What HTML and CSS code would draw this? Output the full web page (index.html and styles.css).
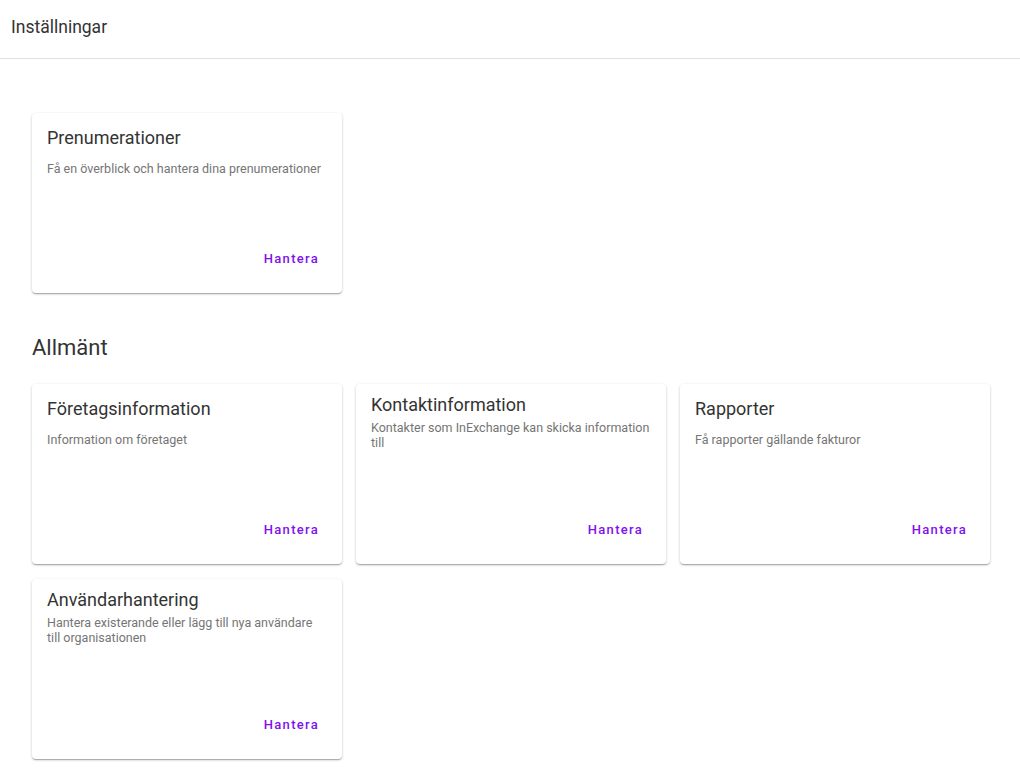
FILE: index.html
```html
<!DOCTYPE html>
<html lang="sv">
<head>
    <meta charset="UTF-8">
    <meta name="viewport" content="width=device-width, initial-scale=1.0">
    <title>Inställningar</title>
    <link rel="stylesheet" href="styles.css">
</head>
<body>
    <header class="topbar">
        <h1 class="topbar-title">Inställningar</h1>
    </header>
    <main class="content">
        <section class="card-grid">
            <div class="card">
                <div class="card-header">
                    <h3 class="card-title">Prenumerationer</h3>
                    <p class="card-text">Få en överblick och hantera dina prenumerationer</p>
                </div>
                <div class="card-actions">
                    <button type="button" class="card-btn">Hantera</button>
                </div>
            </div>
        </section>

        <h2 class="section-title">Allmänt</h2>
        <section class="card-grid">
            <div class="card">
                <div class="card-header">
                    <h3 class="card-title">Företagsinformation</h3>
                    <p class="card-text">Information om företaget</p>
                </div>
                <div class="card-actions">
                    <button type="button" class="card-btn">Hantera</button>
                </div>
            </div>
            <div class="card">
                <div class="card-header">
                    <h3 class="card-title">Kontaktinformation</h3>
                    <p class="card-text">Kontakter som InExchange kan skicka information<br>till</p>
                </div>
                <div class="card-actions">
                    <button type="button" class="card-btn">Hantera</button>
                </div>
            </div>
            <div class="card">
                <div class="card-header">
                    <h3 class="card-title">Rapporter</h3>
                    <p class="card-text">Få rapporter gällande fakturor</p>
                </div>
                <div class="card-actions">
                    <button type="button" class="card-btn">Hantera</button>
                </div>
            </div>
            <div class="card">
                <div class="card-header">
                    <h3 class="card-title">Användarhantering</h3>
                    <p class="card-text">Hantera existerande eller lägg till nya användare<br>till organisationen</p>
                </div>
                <div class="card-actions">
                    <button type="button" class="card-btn">Hantera</button>
                </div>
            </div>
        </section>
    </main>
</body>
</html>
```

FILE: styles.css
```css
body {
    margin: 0;
    font-family: Roboto, "Liberation Sans", Arial, sans-serif;
    background-color: #fff;
    color: #333;
}
.topbar {
    height: 58px;
    border-bottom: 1px solid #e0e0e0;
    display: flex;
    align-items: center;
    padding: 0 11px;
}
.topbar-title {
    margin: 0 0 4px 0;
    font-size: 17.5px;
    font-weight: 400;
    color: #333;
}
.content {
    padding: 54px 32px 20px;
}
.card-grid {
    display: grid;
    grid-template-columns: repeat(3, 310px);
    gap: 15px 14px;
}
.card {
    height: 180px;
    background-color: #fff;
    border-radius: 4px;
    box-shadow: 0 1px 3px rgba(0, 0, 0, 0.2), 0 1px 1px rgba(0, 0, 0, 0.14), 0 2px 1px -1px rgba(0, 0, 0, 0.12);
    display: flex;
    flex-direction: column;
}
.card-header {
    margin-top: 7px;
    height: 61px;
    padding: 0 10px 0 15px;
    display: flex;
    flex-direction: column;
    justify-content: space-around;
}
.card-title {
    margin: 0;
    font-size: 18px;
    font-weight: 400;
    line-height: 24px;
    color: #333;
}
.card-text {
    margin: 0;
    font-size: 12.5px;
    line-height: 15px;
    color: #757575;
}
.card-actions {
    margin-top: auto;
    display: flex;
    justify-content: flex-end;
    padding: 0 15px 17px;
}
.card-btn {
    font-family: Roboto, "Liberation Sans", Arial, sans-serif;
    font-size: 13px;
    font-weight: 500;
    letter-spacing: 1.3px;
    color: #7f10f0;
    background: none;
    border: none;
    padding: 0 8px;
    height: 36px;
    cursor: pointer;
}
.section-title {
    margin: 39px 0 20px;
    font-size: 22px;
    font-weight: 400;
    line-height: 32px;
    color: #333;
}
```
